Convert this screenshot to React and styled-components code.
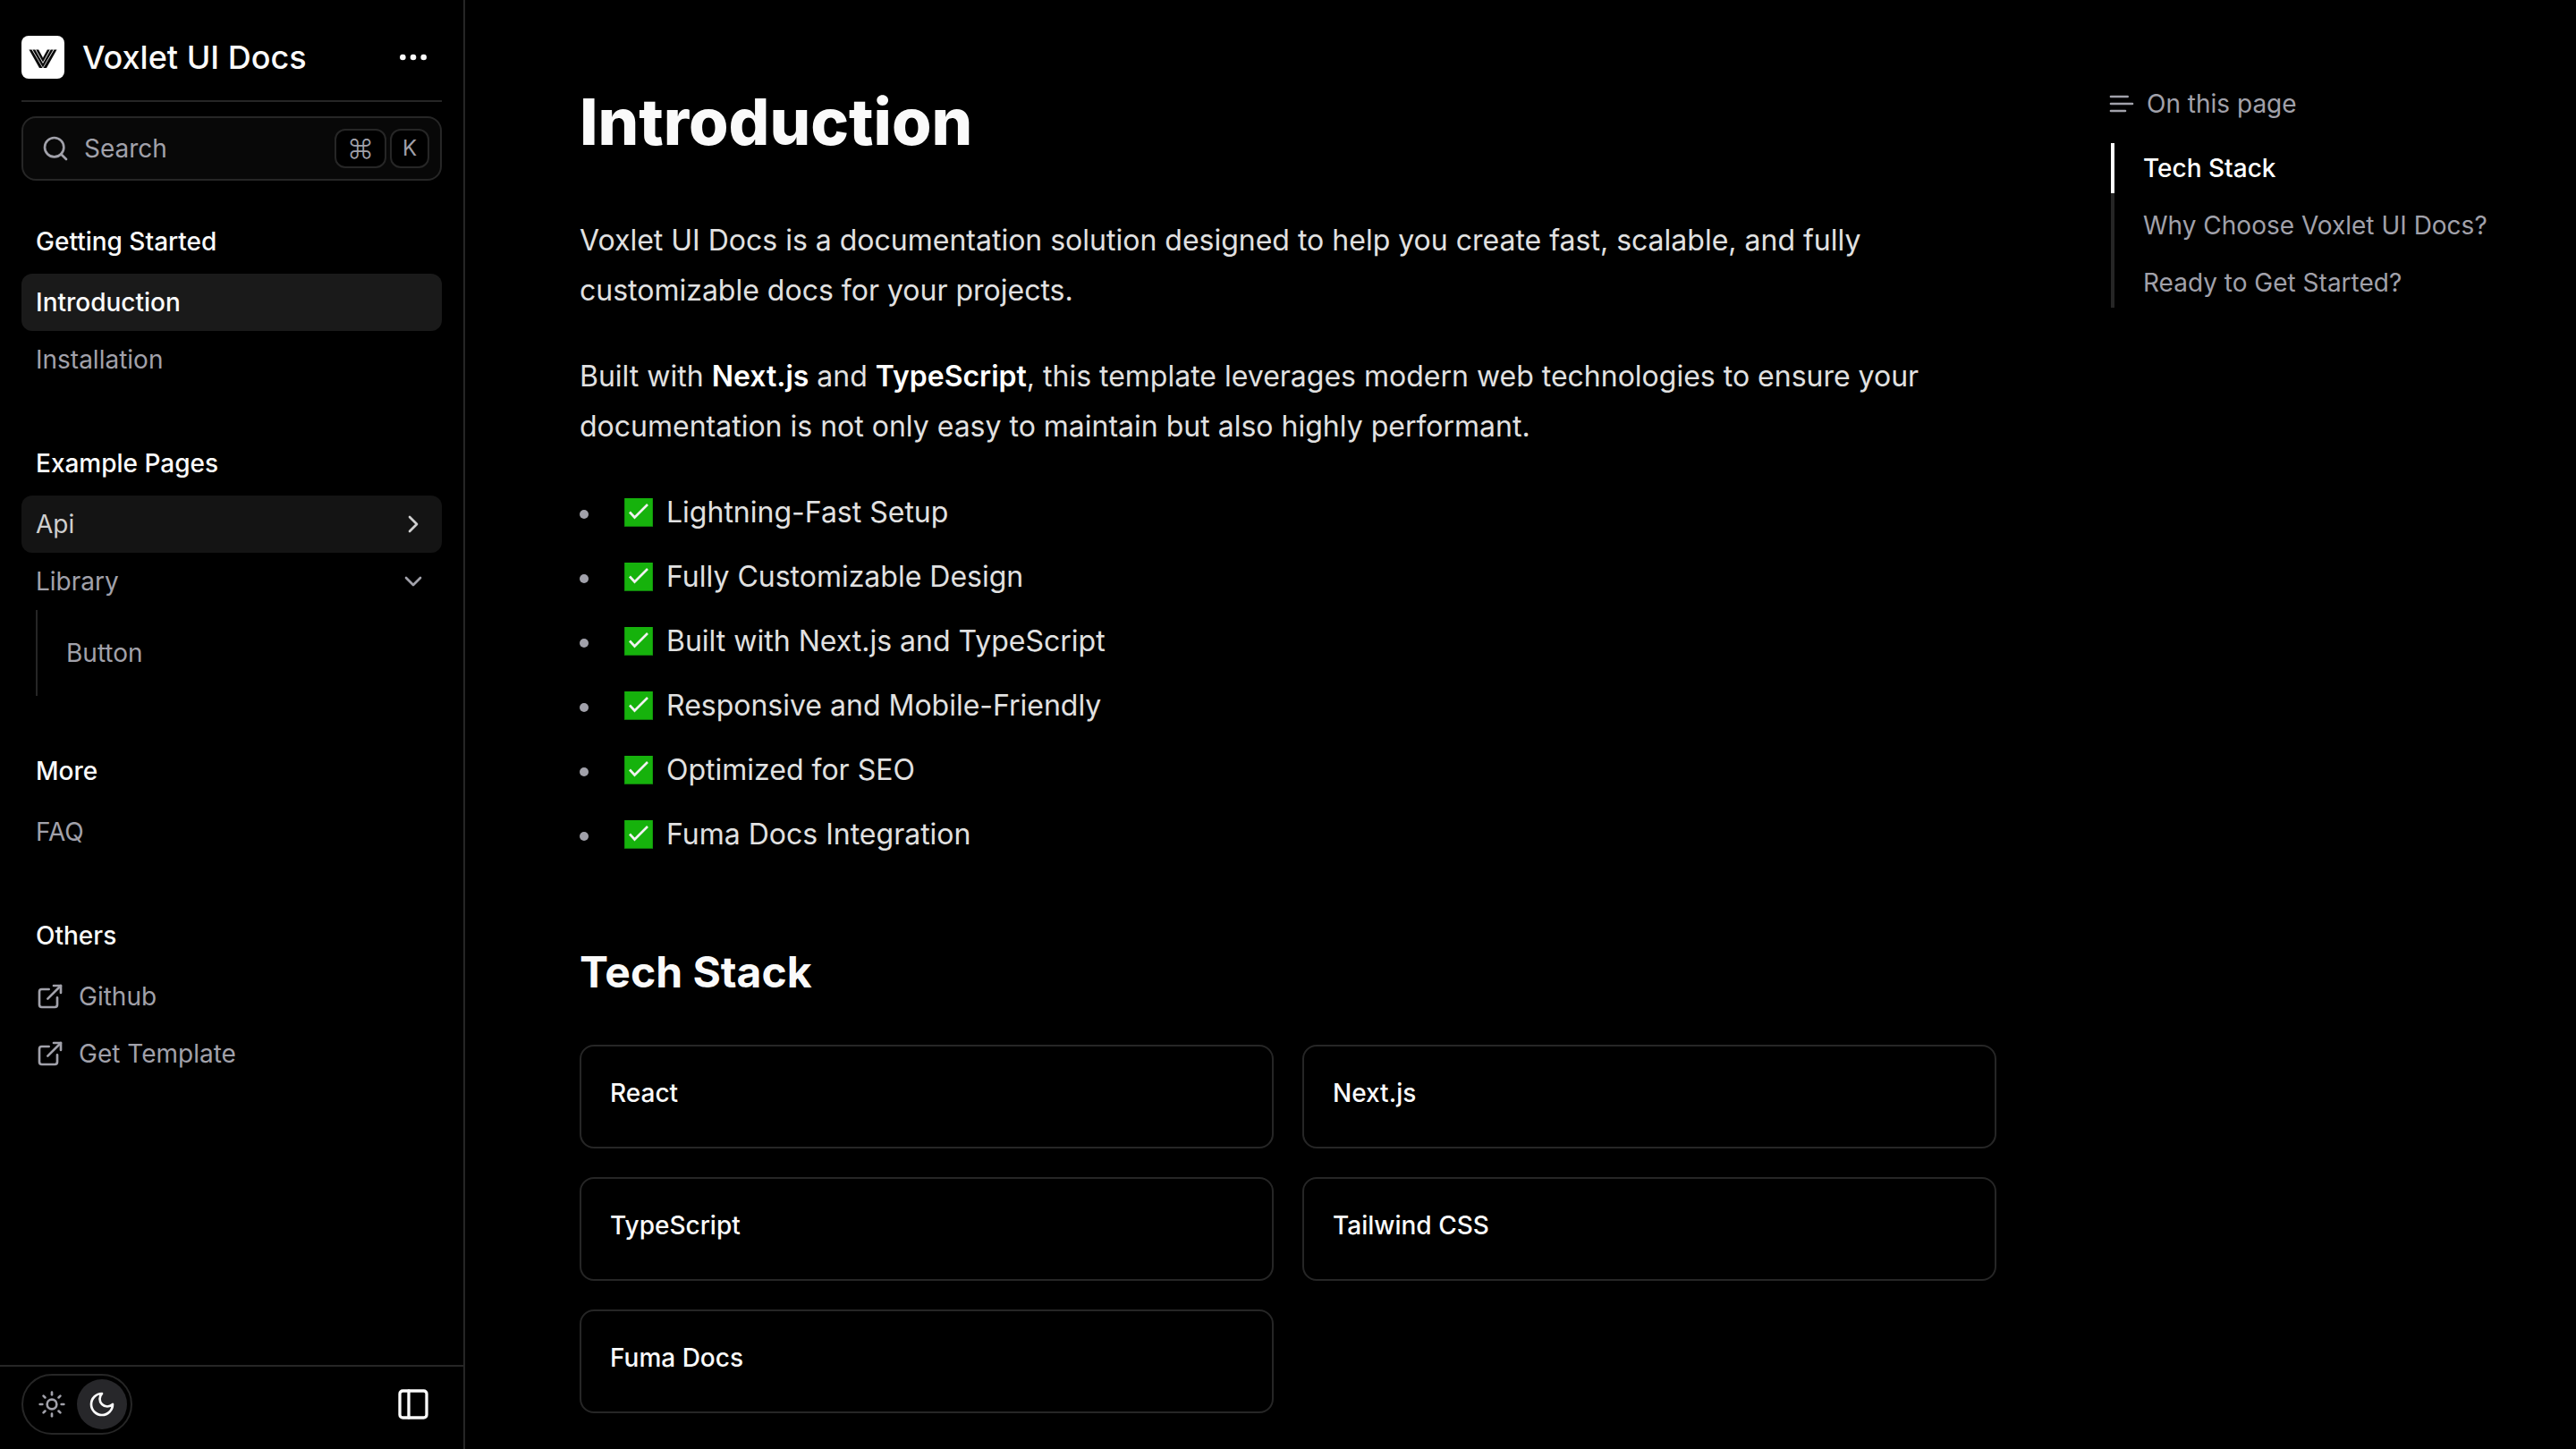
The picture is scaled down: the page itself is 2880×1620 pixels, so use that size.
import React from 'react';
import styled, { createGlobalStyle, css } from 'styled-components';
import { Ellipsis, Search, ChevronRight, ChevronDown, ExternalLink, Sun, PanelLeft } from 'lucide-react';

const c = {
  bg: '#000000',
  fg: '#fafafa',
  prose: '#e1e1e1',
  muted: '#a1a1aa',
  border: '#262626',
  secondary: '#080808',
};

const GlobalStyle = createGlobalStyle`
  *, *::before, *::after { box-sizing: border-box; }
  body {
    margin: 0;
    background: ${c.bg};
    color: ${c.fg};
    font-family: Inter, "Liberation Sans", sans-serif;
    font-size: 28px;
    line-height: 40px;
  }
  h1, h2, h3, p, ul { margin: 0; padding: 0; }
  ul { list-style: none; }
  a { color: inherit; text-decoration: none; }
  button { font: inherit; color: inherit; background: none; border: 0; padding: 0; cursor: pointer; }
  svg { display: block; flex-shrink: 0; }
`;

const Page = styled.div`
  display: grid;
  grid-template-columns: 520px minmax(0, 1fr) 520px;
  height: 100vh;
  overflow: hidden;
`;

const Sidebar = styled.aside`
  display: flex;
  flex-direction: column;
  min-height: 0;
  border-right: 2px solid ${c.border};
`;

const SidebarTop = styled.div`
  display: flex;
  flex-direction: column;
  gap: 16px;
  padding: 24px 24px 0;
`;

const Brand = styled.div`
  display: flex;
  align-items: center;
  justify-content: space-between;
  height: 90px;
  padding-bottom: 8px;
  border-bottom: 2px solid ${c.border};
`;

const BrandLink = styled.a`
  display: flex;
  align-items: center;
  gap: 20px;
  font-size: 36px;
  font-weight: 500;
`;

const IconButton = styled.button`
  display: flex;
  padding: 12px;
`;

const SearchButton = styled.button`
  display: flex;
  align-items: center;
  gap: 16px;
  height: 72px;
  padding: 0 12px 0 20px;
  border: 2px solid ${c.border};
  border-radius: 16px;
  background: ${c.secondary};
  color: ${c.muted};
`;

const Keys = styled.span`
  display: flex;
  gap: 4px;
  margin-left: auto;
`;

const Key = styled.kbd`
  display: flex;
  align-items: center;
  justify-content: center;
  height: 44px;
  padding: 0 12px;
  border: 2px solid ${c.border};
  border-radius: 12px;
  background: ${c.bg};
  font-family: inherit;
  font-size: ${(p) => (p.$symbol ? '30px' : '24px')};
  font-weight: ${(p) => (p.$symbol ? 300 : 400)};
`;

const Nav = styled.nav`
  display: flex;
  flex: 1;
  flex-direction: column;
  gap: 64px;
  min-height: 0;
  padding: 48px 24px;
  overflow: hidden;
`;

const NavTitle = styled.h3`
  padding: 0 16px;
  margin-bottom: 16px;
  font-size: 28px;
  font-weight: 500;
`;

const rowStyle = css`
  display: flex;
  align-items: center;
  gap: 16px;
  width: 100%;
  padding: 12px 16px;
  border-radius: 12px;
  color: ${c.muted};
  text-align: left;
`;

const NavLink = styled.a`
  ${rowStyle}
  ${(p) => p.$active && css`
    background: #1a1a1a;
    color: ${c.fg};
    font-weight: 500;
  `}
`;

const NavFolder = styled.button`
  ${rowStyle}
  justify-content: space-between;
  ${(p) => p.$hovered && css`
    background: #141414;
    color: #cfcfcf;
  `}
`;

const SubList = styled.div`
  margin-left: 16px;
  padding: 16px 0 16px 16px;
  border-left: 2px solid ${c.border};
`;

const SidebarFooter = styled.div`
  display: flex;
  align-items: center;
  justify-content: space-between;
  padding: 8px 24px 16px;
  border-top: 2px solid ${c.border};
`;

const ThemeToggle = styled.div`
  display: flex;
  padding: 4px;
  border: 2px solid ${c.border};
  border-radius: 34px;
`;

const ThemeOption = styled.button`
  display: grid;
  place-items: center;
  width: 56px;
  height: 56px;
  border-radius: 50%;
  background: ${(p) => (p.$active ? '#27272a' : 'transparent')};
  color: ${(p) => (p.$active ? c.fg : c.muted)};
`;

const Main = styled.main`
  padding: 96px 128px 0;
`;

const Title = styled.h1`
  font-size: 72px;
  font-weight: 800;
  line-height: 80px;
  margin-bottom: 65px;
`;

const Prose = styled.div`
  display: flex;
  flex-direction: column;
  gap: 40px;
  color: ${c.prose};
  font-size: 32px;
  line-height: 56px;

  strong { color: #ffffff; font-weight: 600; }
`;

const Features = styled.ul`
  display: flex;
  flex-direction: column;
  gap: 16px;
`;

const Feature = styled.li`
  display: flex;
  align-items: center;
  gap: 15px;

  &::before {
    content: "";
    width: 10px;
    height: 10px;
    margin: 4px 25px 0 0;
    border-radius: 50%;
    background: ${c.muted};
  }
`;

const SectionTitle = styled.h2`
  margin: 94px 0 49px;
  font-size: 48px;
  font-weight: 700;
  line-height: 64px;
`;

const Cards = styled.div`
  display: grid;
  grid-template-columns: 1fr 1fr;
  gap: 32px;
`;

const Card = styled.a`
  padding: 32px 32px 40px;
  border: 2px solid ${c.border};
  border-radius: 16px;
  font-weight: 500;
`;

const Toc = styled.aside`
  padding: 96px 32px 0 0;
  color: ${c.muted};
`;

const TocTitle = styled.h3`
  display: flex;
  align-items: center;
  gap: 12px;
  margin: 0 0 24px -4px;
  font-size: 28px;
  font-weight: 400;
`;

const TocList = styled.nav`
  display: flex;
  flex-direction: column;
  gap: 8px;
  background: linear-gradient(${c.border}, ${c.border}) left / 4px 100% no-repeat;
`;

const TocLink = styled.a`
  padding: 8px 0 8px 32px;
  border-left: 4px solid ${(p) => (p.$active ? '#ffffff' : 'transparent')};
  color: ${(p) => (p.$active ? '#ffffff' : 'inherit')};
  font-weight: ${(p) => (p.$active ? 500 : 400)};
`;

const Logo = () => (
  <svg width="48" height="48" viewBox="0 0 48 48" aria-hidden="true">
    <rect width="48" height="48" rx="8" fill="#fff" />
    <g fill="#0a0a0a">
      <path d="M8.500 15.500h3L23.600 36H20z" />
      <path d="M12.400 15.500h2.900L24 31v4.600z" />
      <path d="M16.200 15.500h2.900L24 24.500v5z" />
      <path d="M39.500 15.500h-3L24.400 36H28z" />
      <path d="M35.600 15.500h-2.900L24 31v4.600z" />
      <path d="M31.800 15.500h-2.900L24 24.500v5z" />
    </g>
  </svg>
);

const MoonIcon = () => (
  <svg width="32" height="32" viewBox="0 0 24 24" fill="none" stroke="currentColor" strokeWidth="2" strokeLinecap="round" strokeLinejoin="round" aria-hidden="true">
    <path d="M12 3a6 6 0 0 0 9 9 9 9 0 1 1-9-9Z" />
  </svg>
);

const TextIcon = () => (
  <svg width="32" height="32" viewBox="0 0 24 24" fill="none" stroke="currentColor" strokeWidth="2" strokeLinecap="round" aria-hidden="true">
    <path d="M15 18H3M17 6H3M21 12H3" />
  </svg>
);

const CheckMark = () => (
  <svg width="32" height="32" viewBox="0 0 32 32" role="img" aria-label="Done">
    <rect width="32" height="32" fill="#0f7a0b" />
    <rect x="0.500" width="31" height="31" fill="#16b20c" />
    <path d="M6 15.500 11.500 21.500 26 7" fill="none" stroke="#f2f2f2" strokeWidth="2.600" />
  </svg>
);

const features = [
  'Lightning-Fast Setup',
  'Fully Customizable Design',
  'Built with Next.js and TypeScript',
  'Responsive and Mobile-Friendly',
  'Optimized for SEO',
  'Fuma Docs Integration',
];

const stack = ['React', 'Next.js', 'TypeScript', 'Tailwind CSS', 'Fuma Docs'];

export default function App() {
  return (
    <>
      <GlobalStyle />
      <Page>
        <Sidebar>
          <SidebarTop>
            <Brand>
              <BrandLink href="#"><Logo />Voxlet UI Docs</BrandLink>
              <IconButton aria-label="More"><Ellipsis size={40} /></IconButton>
            </Brand>
            <SearchButton>
              <Search size={32} />
              Search
              <Keys><Key $symbol>⌘</Key><Key>K</Key></Keys>
            </SearchButton>
          </SidebarTop>
          <Nav>
            <div>
              <NavTitle>Getting Started</NavTitle>
              <NavLink href="#" $active>Introduction</NavLink>
              <NavLink href="#">Installation</NavLink>
            </div>
            <div>
              <NavTitle>Example Pages</NavTitle>
              <NavFolder $hovered>Api<ChevronRight size={32} /></NavFolder>
              <NavFolder>Library<ChevronDown size={32} /></NavFolder>
              <SubList><NavLink href="#">Button</NavLink></SubList>
            </div>
            <div>
              <NavTitle>More</NavTitle>
              <NavLink href="#">FAQ</NavLink>
            </div>
            <div>
              <NavTitle>Others</NavTitle>
              <NavLink href="#"><ExternalLink size={32} />Github</NavLink>
              <NavLink href="#"><ExternalLink size={32} />Get Template</NavLink>
            </div>
          </Nav>
          <SidebarFooter>
            <ThemeToggle>
              <ThemeOption aria-label="Light theme"><Sun size={32} /></ThemeOption>
              <ThemeOption aria-label="Dark theme" $active><MoonIcon /></ThemeOption>
            </ThemeToggle>
            <IconButton aria-label="Collapse sidebar"><PanelLeft size={40} /></IconButton>
          </SidebarFooter>
        </Sidebar>
        <Main>
          <Title>Introduction</Title>
          <Prose>
            <p>
              Voxlet UI Docs is a documentation solution designed to help you create fast, scalable, and fully
              customizable docs for your projects.
            </p>
            <p>
              Built with <strong>Next.js</strong> and <strong>TypeScript</strong>, this template leverages modern web
              technologies to ensure your documentation is not only easy to maintain but also highly performant.
            </p>
            <Features>
              {features.map((f) => (
                <Feature key={f}><CheckMark />{f}</Feature>
              ))}
            </Features>
          </Prose>
          <SectionTitle>Tech Stack</SectionTitle>
          <Cards>
            {stack.map((s) => <Card key={s} href="#">{s}</Card>)}
          </Cards>
        </Main>
        <Toc>
          <TocTitle><TextIcon />On this page</TocTitle>
          <TocList>
            <TocLink href="#" $active>Tech Stack</TocLink>
            <TocLink href="#">Why Choose Voxlet UI Docs?</TocLink>
            <TocLink href="#">Ready to Get Started?</TocLink>
          </TocList>
        </Toc>
      </Page>
    </>
  );
}
